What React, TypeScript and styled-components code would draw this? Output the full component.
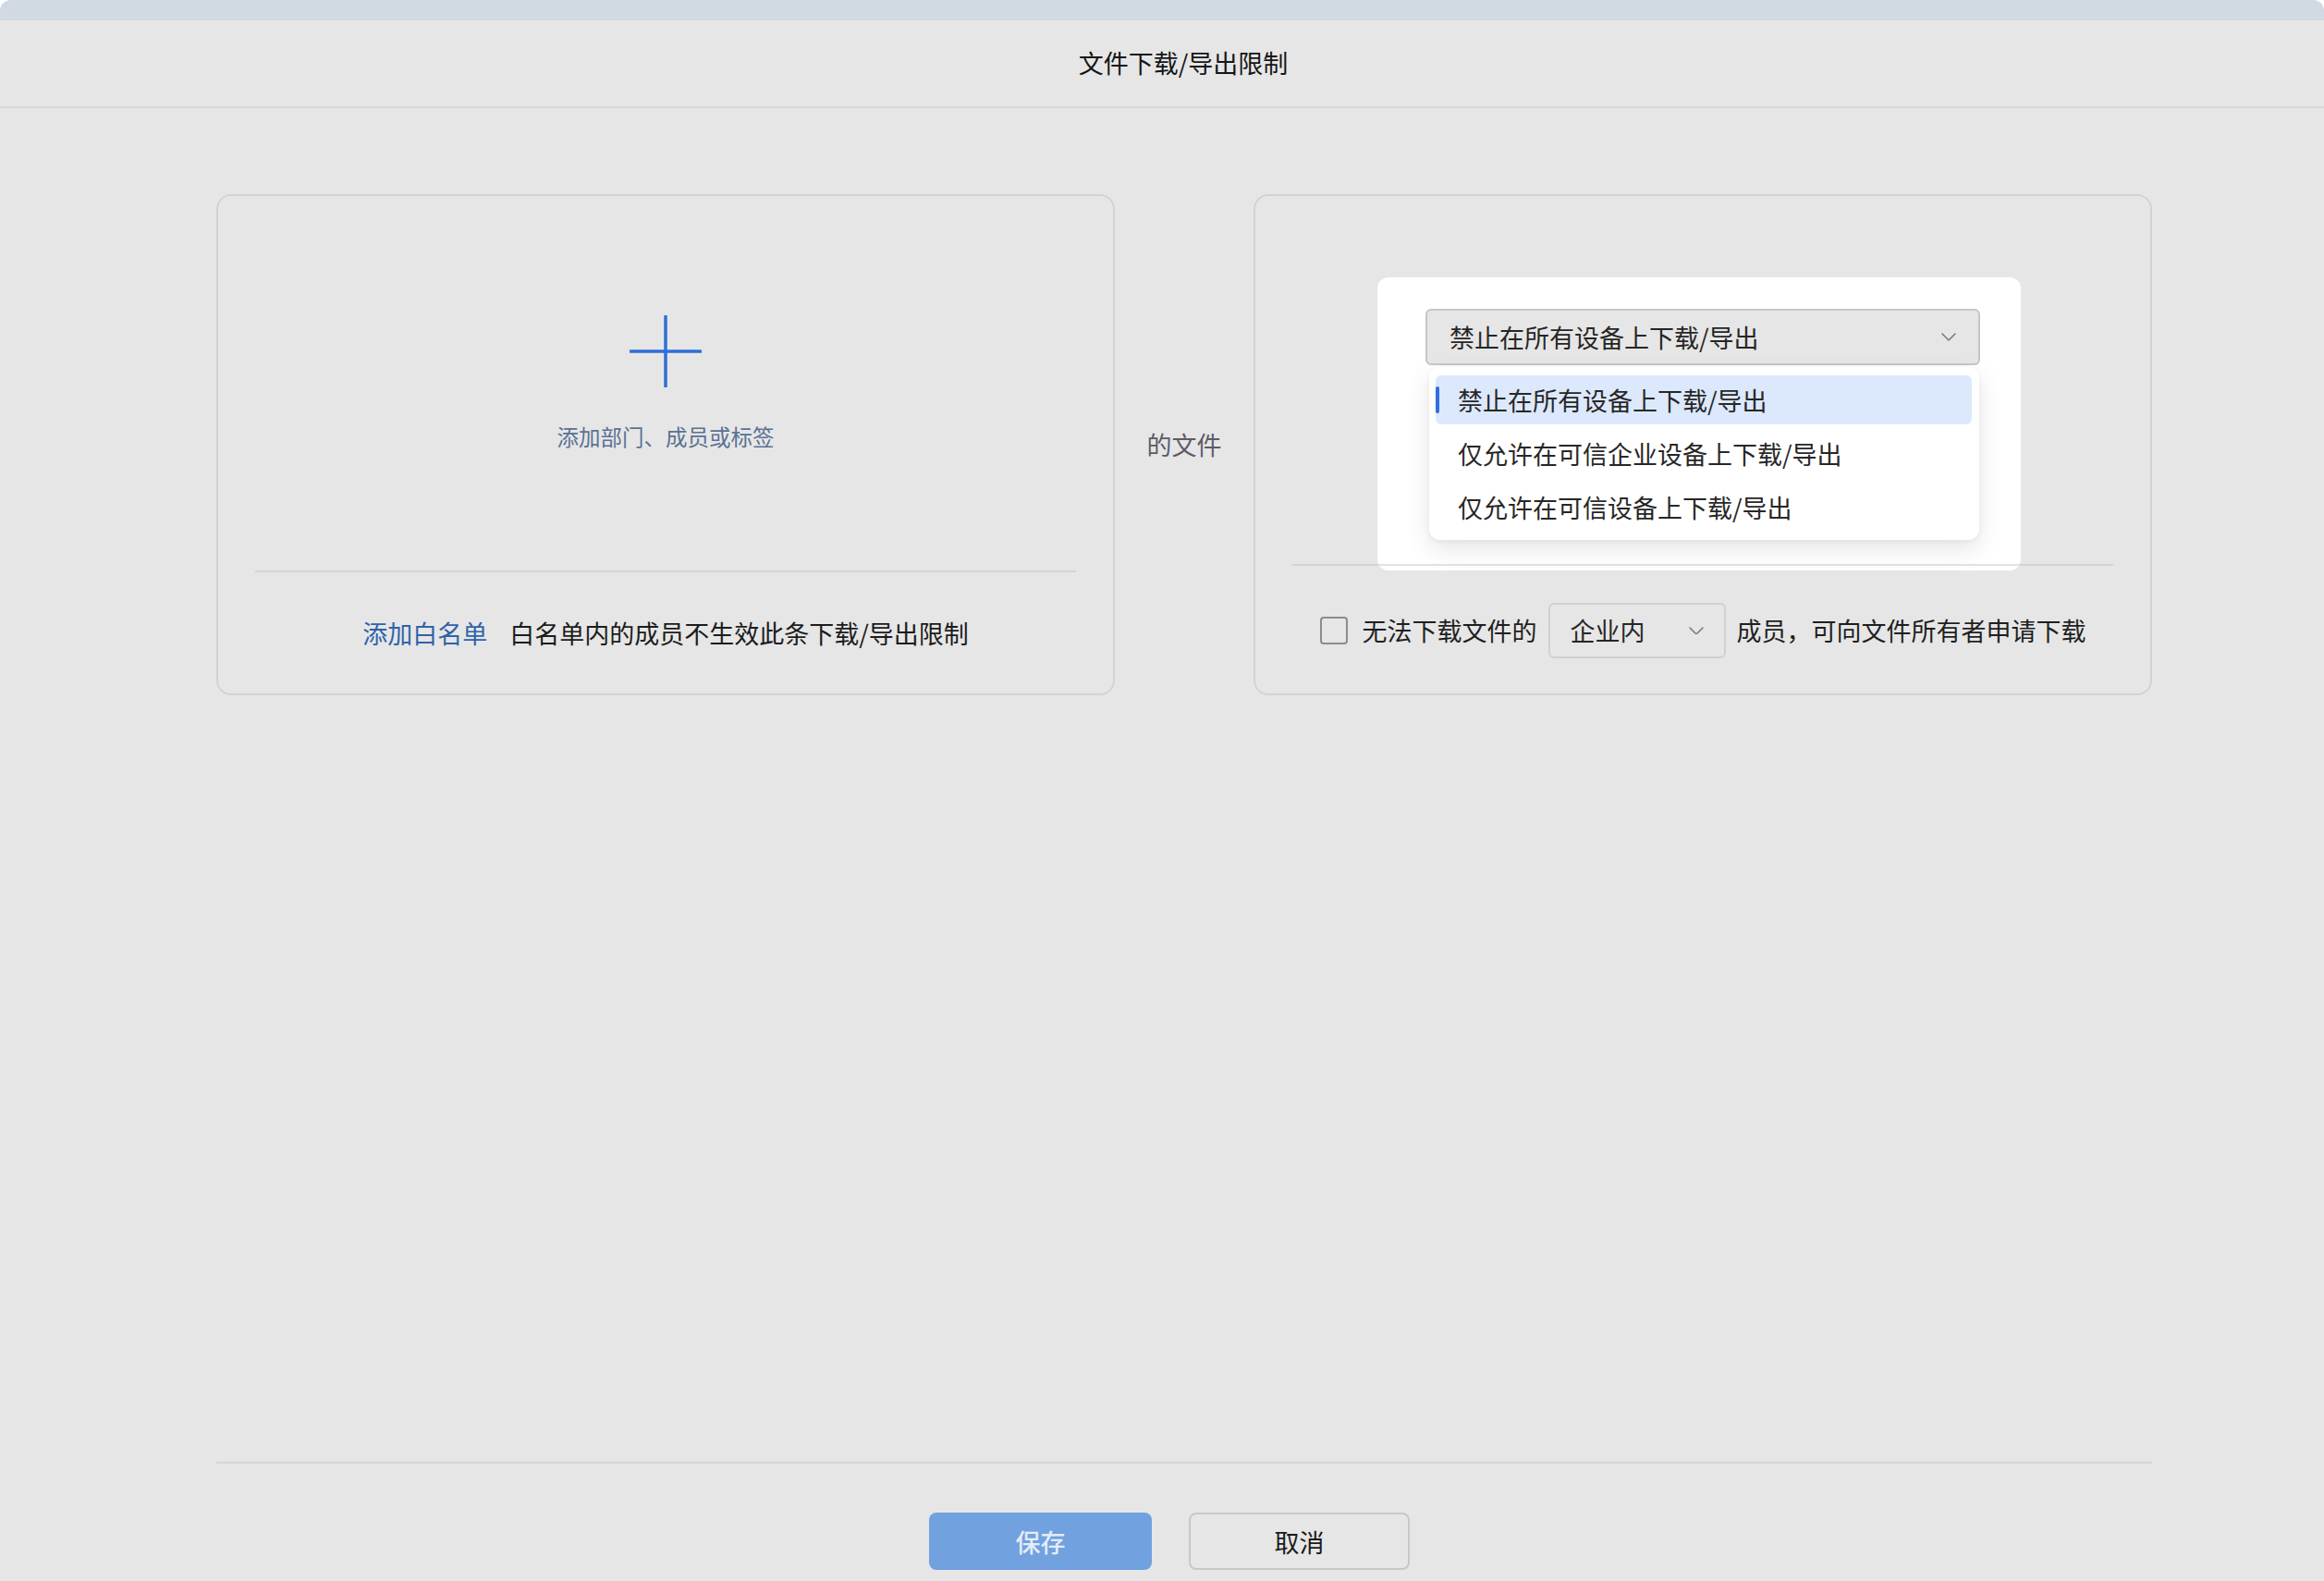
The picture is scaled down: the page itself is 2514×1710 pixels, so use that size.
import React from "react";
import { styled, createGlobalStyle } from "styled-components";

const GlobalStyle = createGlobalStyle`
  html, body {
    margin: 0;
    padding: 0;
    background: #ffffff;
  }
  body {
    font-family: "Noto Sans CJK SC", "Noto Sans", sans-serif;
    color: #1e1e1e;
  }
  * {
    box-sizing: border-box;
  }
`;

const Chevron = ({ size = 16 }: { size?: number }) => (
  <svg width={size} height={size * 0.56} viewBox="0 0 16 9" fill="none">
    <polyline
      points="1,1 8,8 15,1"
      stroke="#7a7a7a"
      strokeWidth={1.6}
      strokeLinecap="round"
      strokeLinejoin="round"
    />
  </svg>
);

const PlusIcon = () => (
  <svg width={78} height={78} viewBox="0 0 78 78" fill="none">
    <line x1="39" y1="1" x2="39" y2="77" stroke="#2e6fd8" strokeWidth={3.5} strokeLinecap="round" />
    <line x1="1" y1="39" x2="77" y2="39" stroke="#2e6fd8" strokeWidth={3.5} strokeLinecap="round" />
  </svg>
);

const options = [
  "禁止在所有设备上下载/导出",
  "仅允许在可信企业设备上下载/导出",
  "仅允许在可信设备上下载/导出",
];

const App = () => {
  return (
    <>
      <GlobalStyle />
      <Frame>
        <TitleBar />
        <Header>
          <Title>文件下载/导出限制</Title>
        </Header>
        <Body>
          <Cards>
            <Card>
              <TopArea $height={405}>
                <AddBox>
                  <PlusIcon />
                  <AddLabel>添加部门、成员或标签</AddLabel>
                </AddBox>
              </TopArea>
              <Divider />
              <BottomArea>
                <LinkText>添加白名单</LinkText>
                <Note>白名单内的成员不生效此条下载/导出限制</Note>
              </BottomArea>
            </Card>

            <Joiner>的文件</Joiner>

            <Card>
              <Spotlight />
              <TopArea $height={398} $top={122}>
                <SelectWrap>
                  <Select $width={600} $height={61} $pad={26}>
                    <span>{options[0]}</span>
                    <Chevron />
                  </Select>
                  <Menu>
                    {options.map((o, i) => (
                      <MenuItem key={o} $active={i === 0}>
                        {o}
                      </MenuItem>
                    ))}
                  </Menu>
                </SelectWrap>
              </TopArea>
              <Divider $raised />
              <BottomArea $compact>
                <Checkbox />
                <RowText>无法下载文件的</RowText>
                <Select $width={192} $height={60} $pad={24} $light>
                  <span>企业内</span>
                  <Chevron />
                </Select>
                <RowText>成员，可向文件所有者申请下载</RowText>
              </BottomArea>
            </Card>
          </Cards>
        </Body>
        <Footer>
          <FooterLine />
          <Buttons>
            <PrimaryButton>保存</PrimaryButton>
            <GhostButton>取消</GhostButton>
          </Buttons>
        </Footer>
      </Frame>
    </>
  );
};

const Frame = styled.div`
  width: 2514px;
  height: 1710px;
  background: #e6e6e6;
  border-radius: 12px 12px 0 0;
  overflow: hidden;
  display: flex;
  flex-direction: column;
`;

const TitleBar = styled.div`
  height: 22px;
  background: #d1d9e3;
`;

const Header = styled.div`
  height: 95px;
  border-bottom: 2px solid #d6d6d6;
  display: flex;
  align-items: center;
  justify-content: center;
  padding-left: 46px;
  padding-bottom: 1px;
`;

const Title = styled.div`
  font-size: 27px;
  line-height: 36px;
  color: #161616;
`;

const Body = styled.div`
  flex: 1;
  padding: 93px 0 0 234px;
`;

const Cards = styled.div`
  width: 2094px;
  display: flex;
  align-items: center;
`;

const Card = styled.div`
  position: relative;
  width: 972px;
  height: 542px;
  border: 2px solid #d3d3d3;
  border-radius: 16px;
  display: flex;
  flex-direction: column;
`;

const TopArea = styled.div<{ $height: number; $top?: number }>`
  height: ${(p) => p.$height}px;
  display: flex;
  flex-direction: column;
  align-items: center;
  justify-content: ${(p) => (p.$top ? "flex-start" : "center")};
  padding-top: ${(p) => p.$top ?? 0}px;
  position: relative;
  z-index: 2;
`;

const AddBox = styled.div`
  display: flex;
  flex-direction: column;
  align-items: center;
  gap: 36px;
`;

const AddLabel = styled.div`
  font-size: 23.5px;
  line-height: 34px;
  color: #5a7293;
`;

const Divider = styled.div<{ $raised?: boolean }>`
  height: 2px;
  margin: 0 40px;
  background: ${(p) => (p.$raised ? "rgba(190, 190, 190, 0.45)" : "#d4d4d4")};
  position: relative;
  z-index: 1;
`;

const BottomArea = styled.div<{ $compact?: boolean }>`
  flex: 1;
  display: flex;
  align-items: center;
  justify-content: center;
  gap: ${(p) => (p.$compact ? "12px" : "24px")};
  padding-top: ${(p) => (p.$compact ? "2px" : "0")};
  font-size: 27px;
  line-height: 36px;
`;

const LinkText = styled.span`
  color: #2f62aa;
`;

const Note = styled.span`
  color: #1c1c1c;
`;

const Joiner = styled.div`
  width: 150px;
  text-align: center;
  font-size: 27px;
  line-height: 36px;
  color: #5c5c66;
`;

const Spotlight = styled.div`
  position: absolute;
  left: 132px;
  top: 88px;
  width: 696px;
  height: 317px;
  background: #ffffff;
  border-radius: 12px;
  z-index: 0;
`;

const SelectWrap = styled.div`
  position: relative;
`;

const Select = styled.div<{ $width: number; $height: number; $pad: number; $light?: boolean }>`
  width: ${(p) => p.$width}px;
  height: ${(p) => p.$height}px;
  padding: 0 ${(p) => p.$pad - 2}px 0 ${(p) => p.$pad - 2}px;
  display: flex;
  align-items: center;
  justify-content: space-between;
  border: 2px solid ${(p) => (p.$light ? "#d0d0d0" : "#c6c6c6")};
  border-radius: 6px;
  background: #e6e6e6;
  font-size: 27px;
  line-height: 36px;
  color: #262626;
  flex-shrink: 0;
`;

const Menu = styled.div`
  position: absolute;
  left: 4px;
  top: calc(100% + 2px);
  width: 595px;
  padding: 9px 8px 9px 7px;
  display: flex;
  flex-direction: column;
  gap: 5px;
  background: #ffffff;
  border-radius: 12px;
  box-shadow: 0 10px 28px rgba(0, 0, 0, 0.1), 0 2px 6px rgba(0, 0, 0, 0.05);
`;

const MenuItem = styled.div<{ $active?: boolean }>`
  position: relative;
  height: 53px;
  display: flex;
  align-items: center;
  padding-left: 24px;
  border-radius: 6px;
  font-size: 27px;
  line-height: 36px;
  color: #272727;
  background: ${(p) => (p.$active ? "#dce8fb" : "transparent")};

  &::before {
    content: "";
    display: ${(p) => (p.$active ? "block" : "none")};
    position: absolute;
    left: 0;
    top: 12px;
    width: 4px;
    height: 29px;
    border-radius: 2px;
    background: #2f6fe2;
  }
`;

const Checkbox = styled.div`
  width: 30px;
  height: 30px;
  border: 2px solid #8c8c8c;
  border-radius: 4px;
  margin-right: 4px;
  flex-shrink: 0;
`;

const RowText = styled.span`
  color: #1f1f1f;
  white-space: nowrap;
`;

const Footer = styled.div`
  padding: 0 0 12px 234px;
`;

const FooterLine = styled.div`
  width: 2094px;
  height: 2px;
  background: #d6d6d6;
`;

const Buttons = styled.div`
  width: 2094px;
  padding: 53px 32px 0 0;
  display: flex;
  justify-content: center;
  gap: 40px;
`;

const PrimaryButton = styled.button`
  width: 241px;
  height: 62px;
  border: none;
  border-radius: 8px;
  background: #71a1df;
  color: #e4ecf7;
  font-family: inherit;
  font-size: 27px;
  font-weight: 500;
`;

const GhostButton = styled.button`
  width: 239px;
  height: 62px;
  border: 2px solid #c8c8c8;
  border-radius: 8px;
  background: transparent;
  color: #1a1a1a;
  font-family: inherit;
  font-size: 27px;
`;

export default App;
